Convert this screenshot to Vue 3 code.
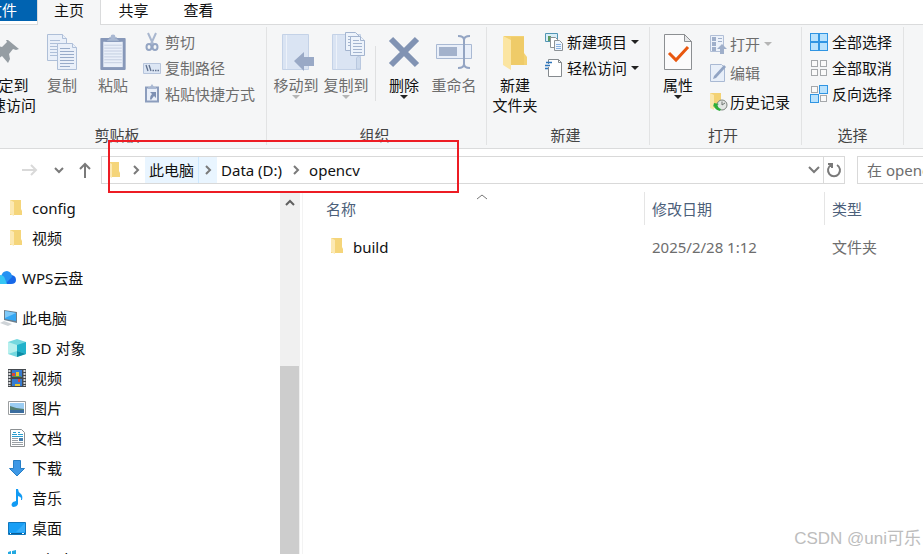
<template>
  <div class="explorer">
    <nav class="tabs">
      <button class="tab tab-file">文件</button>
      <button class="tab active">主页</button>
      <button class="tab">共享</button>
      <button class="tab">查看</button>
    </nav>

    <div class="ribbon">
      <section class="group clipboard">
        <div class="tools">
          <button class="big">
            <svg width="30" height="36" viewBox="0 0 30 36">
              <path fill="#959da3" d="M17 6 28 15l-3 1-3-1-4 5 1 5-2 4-6-7-9 7v-3l6-7-6-5 4-2 5 1 5-5-1-2z" />
            </svg>
            <span>固定到<br />快速访问</span>
          </button>
          <button class="big mid" disabled>
            <svg width="32" height="36" viewBox="0 0 32 36">
              <g fill="#eaf0f9" stroke="#aebfd8">
                <path d="M1.500.5h15l4 4v22h-19z" />
                <path d="M16.500.5v4h4" />
                <path d="M4 6.500h10M4 9.500h14M4 12.500h14M4 15.500h14M4 18.500h14M4 21.500h14" />
                <path d="M11.500 9.500h15l4 4v22h-19z" />
                <path d="M26.500 9.500v4h4" />
                <path stroke="#98abc9" d="M14 14.500h10M14 17.500h14M14 20.500h14M14 23.500h14M14 26.500h14M14 29.500h14M14 32.500h10" />
              </g>
            </svg>
            <span>复制</span>
          </button>
          <button class="big mid" disabled>
            <svg width="28" height="37" viewBox="0 0 28 37">
              <rect x="1" y="4" width="26" height="33" rx="1" fill="#8798b9" />
              <path fill="#e9eff9" d="M4 8h20v26H4z" />
              <path stroke="#c3cee0" d="M5 11.500h18M5 14.500h18M5 17.500h18M5 20.500h18M5 23.500h18M5 26.500h18M5 29.500h18" />
              <path fill="#a9b8d2" stroke="#8798b9" d="M6.500 7.500l4-3.500h7l4 3.500z" />
              <circle cx="14" cy="3" r="2.500" fill="#a9b8d2" />
            </svg>
            <span>粘贴</span>
          </button>
          <div class="small-list after-mid">
            <button class="small" disabled>
              <svg width="18" height="18" viewBox="0 0 18 18" fill="none" stroke="#94a5c3" stroke-width="2">
                <path d="M5 0l5 11M13 0L8 11" stroke="#a9b7cf" />
                <ellipse cx="6" cy="14" rx="2.500" ry="3" />
                <ellipse cx="12" cy="14" rx="2.500" ry="3" />
              </svg>
              <span>剪切</span>
            </button>
            <button class="small" disabled>
              <svg width="18" height="18" viewBox="0 0 18 18">
                <path fill="#dce6f4" stroke="#b7c5dc" d="M.5 4.500h17v10H.5z" />
                <path fill="none" stroke="#61728f" stroke-width="1.300" d="M3 6l2 6M6 6l2 6M9.500 11.500h1.500M12 11.500h1.500M14.500 11.500h1.500" />
              </svg>
              <span>复制路径</span>
            </button>
            <button class="small" disabled>
              <svg width="18" height="18" viewBox="0 0 18 18">
                <path fill="#e9eff9" stroke="#8c9dbd" stroke-width="2" d="M3 2.500h12v14H3z" />
                <path fill="#a9b8d2" d="M5 4V2h2l2-3 2 3h2v2z" />
                <path fill="#7d90b3" d="M7 7h6v6l-2-2-3 4-1-1 .5-3L9 9z" />
              </svg>
              <span>粘贴快捷方式</span>
            </button>
          </div>
        </div>
        <div class="group-name">剪贴板</div>
      </section>

      <section class="group organize">
        <div class="tools">
          <button class="big mid" disabled>
            <svg width="34" height="36" viewBox="0 0 34 36">
              <path fill="#dae4f3" stroke="#c4d2e7" d="M3.500.5h26v35h-26z" />
              <path stroke="#edf2fa" d="M7.500 1v34" />
              <path fill="#99a9c6" d="M15 27l10-9v5h10v9H25v5z" />
            </svg>
            <span>移动到</span>
            <i class="caret"></i>
          </button>
          <button class="big mid" disabled>
            <svg width="34" height="36" viewBox="0 0 34 36">
              <path fill="#dae4f3" stroke="#c4d2e7" d="M3.500.5h28v35h-28z" />
              <path stroke="#edf2fa" d="M7.500 1v34" />
              <path fill="#cddaec" stroke="#b9c8df" d="M27.500 35V24l2-2 2 2v11z" />
              <g fill="#edf3fb" stroke="#a3b4cf">
                <path d="M16.500-1.500h10l5 5v13h-15z" />
                <path d="M19 2.500h6M19 5.500h6M19 8.500h6M19 11.500h6" />
                <path d="M21.500 2.500h10l4 4v15h-14z" />
                <path d="M31.500 2.500v4h4M24 6.500h6M24 9.500h9M24 12.500h9M24 15.500h9M24 18.500h9" />
              </g>
            </svg>
            <span>复制到</span>
            <i class="caret"></i>
          </button>
          <div class="divider"></div>
          <button class="big mid">
            <svg width="34" height="36" viewBox="0 0 34 36">
              <path fill="none" stroke="#8193b3" stroke-width="6" d="M4 5l26 26M30 5L4 31" />
            </svg>
            <span>删除</span>
            <i class="caret"></i>
          </button>
          <button class="big mid" disabled>
            <svg width="36" height="36" viewBox="0 0 36 36">
              <path fill="#e9eff9" stroke="#a9b9d3" d="M.5 10.500h35v14H.5z" />
              <path fill="#a3b2cc" d="M3 13h18v9H3z" />
              <path fill="none" stroke="#94a5c3" stroke-width="2" d="M28 4v28M22 2q6 0 6 4 0-4 6-4M22 34q6 0 6-4 0 4 6 4" />
            </svg>
            <span>重命名</span>
          </button>
        </div>
        <div class="group-name">组织</div>
      </section>

      <section class="group create">
        <div class="tools">
          <button class="big mid">
            <svg width="28" height="36" viewBox="0 0 28 36">
              <path fill="#f3d274" d="M3 2h20v17l3 4v8H3z" />
              <path fill="#eac35c" d="M10 3h13v28H10z" opacity=".45" />
              <path fill="#fbe5a2" d="M2 2l8 4v30l-8-5z" />
            </svg>
            <span>新建<br />文件夹</span>
          </button>
          <div class="small-list">
            <button class="small">
              <svg width="18" height="18" viewBox="0 0 18 18">
                <path fill="#d9eef8" stroke="#5296b5" d="M.5.5h12v8H.5z" />
                <path fill="#5c9a61" d="M3 3h3v5H3z" />
                <path fill="#fff" stroke="#8d9296" d="M5.500 4.500h5l3 3v7h-8z" />
                <path fill="#eef5fe" stroke="#8d9296" d="M9.500 7.500h5l3 3v7h-8z" />
                <path stroke="#88b0e0" d="M11 11.500h5M11 13.500h5M11 15.500h5" />
              </svg>
              <span>新建项目</span>
              <i class="caret"></i>
            </button>
            <button class="small">
              <svg width="18" height="18" viewBox="0 0 18 18">
                <path fill="#fff" stroke="#858a8e" d="M3.500 5V.5h10l3 3v14h-13V8" />
                <path fill="none" stroke="#858a8e" d="M13.500.5v3h3" />
                <path stroke="#2e76bb" stroke-width="1.500" d="M1 3.500h6M0 6.500h5M0 9.500h3" />
              </svg>
              <span>轻松访问</span>
              <i class="caret"></i>
            </button>
          </div>
        </div>
        <div class="group-name">新建</div>
      </section>

      <section class="group open">
        <div class="tools">
          <button class="big mid">
            <svg width="28" height="36" viewBox="0 0 28 36">
              <path fill="#fbfbfc" stroke="#8c8f92" d="M.5.5h20l7 7v28H.5z" />
              <path fill="#e6e7e9" stroke="#8c8f92" d="M20.500.5v7h7z" />
              <path fill="none" stroke="#e8570f" stroke-width="3" d="M5 19l7 7 12-13" />
            </svg>
            <span>属性</span>
            <i class="caret"></i>
          </button>
          <div class="small-list roomy">
            <button class="small" disabled>
              <svg width="16" height="18" viewBox="0 0 16 18">
                <path fill="#edf2fa" stroke="#b1bfd7" d="M.5.5h13v16H.5z" />
                <path fill="#9fafca" d="M2 2h4v4H2zM2 7h4v4H2zM2 12h4v4H2zM8 3h4v1H8zM8 6h4v1H8zM12 9l5 5h-3v5h-4v-5H7z" />
              </svg>
              <span>打开</span>
              <i class="caret"></i>
            </button>
            <button class="small" disabled>
              <svg width="16" height="18" viewBox="0 0 16 18">
                <path fill="#e8eff9" stroke="#a9b9d3" d="M.5.5h11l3 3v14H.5z" />
                <path fill="#91a4c4" d="M3 15l1-3L14 1l2 2L6 14z" />
              </svg>
              <span>编辑</span>
            </button>
            <button class="small">
              <svg width="16" height="18" viewBox="0 0 16 18">
                <path fill="#f3d274" d="M0 0h11v15H0z" />
                <path fill="#fbe7ac" d="M0 0l4 2v15l-4-2z" />
                <circle cx="12" cy="12" r="5" fill="#e3e6e4" stroke="#7b827d" />
                <path fill="none" stroke="#6f7571" d="M12 8.500V12l3-2" />
                <path fill="#2fae3a" d="M4 10l5 1-2 1q1 3 4 4l-1 2q-5-1-6-5l-1 1z" />
              </svg>
              <span>历史记录</span>
            </button>
          </div>
        </div>
        <div class="group-name">打开</div>
      </section>

      <section class="group select">
        <div class="tools">
          <div class="small-list">
            <button v-for="item in selectItems" :key="item.label" class="small">
              <svg width="18" height="18" viewBox="0 0 18 18">
                <rect
                  v-for="(on, i) in item.cells"
                  :key="i"
                  :x="(i % 2) * 9 + (on ? 0.5 : 1.5)"
                  :y="(i > 1 ? 9 : 0) + (on ? 0.5 : 1.5)"
                  :width="on ? 8 : 6"
                  :height="on ? 8 : 6"
                  :fill="on ? '#b9e2fd' : '#fafafa'"
                  :stroke="on ? '#3095e3' : '#a5a8ab'"
                />
              </svg>
              <span>{{ item.label }}</span>
            </button>
          </div>
        </div>
        <div class="group-name">选择</div>
      </section>
    </div>

    <div class="address-row">
      <button class="nav forward" aria-label="前进" disabled>
        <svg width="16" height="14" viewBox="0 0 16 14"><path d="M0 7h14M9 2l5 5-5 5" /></svg>
      </button>
      <button class="nav recent" aria-label="最近浏览的位置">
        <svg width="10" height="8" viewBox="0 0 10 8"><path d="M1 2l4 4 4-4" /></svg>
      </button>
      <button class="nav up" aria-label="上移">
        <svg width="14" height="16" viewBox="0 0 14 16"><path d="M7 16V2M2 7l5-5 5 5" /></svg>
      </button>
      <div class="address">
        <svg class="folder" width="13" height="18" viewBox="0 0 13 18">
          <path fill="#f5d57a" d="M0 1h11v9l1 2v4H0z" />
          <path fill="#fce9b3" d="M0 1l4 2v14l-4-2z" />
        </svg>
        <template v-for="(crumb, i) in crumbs" :key="crumb">
          <span v-if="crumbs[i - 1] !== hovered" class="sep">
            <svg width="8" height="10" viewBox="0 0 8 10"><path d="M2 1l4 4-4 4" /></svg>
          </span>
          <span v-if="crumb === hovered" class="crumb-hover">
            <button class="crumb">{{ crumb }}</button>
            <span class="sep">
              <svg width="8" height="10" viewBox="0 0 8 10"><path d="M2 1l4 4-4 4" /></svg>
            </span>
          </span>
          <button v-else class="crumb">{{ crumb }}</button>
        </template>
        <button class="drop" aria-label="以前的位置">
          <svg width="12" height="8" viewBox="0 0 12 8"><path d="M1 1l5 5 5-5" /></svg>
        </button>
        <button class="refresh" aria-label="刷新">
          <svg width="16" height="16" viewBox="0 0 16 16"><path d="M11 3a6 6 0 1 1-6 0M2 2h4v4" /></svg>
        </button>
      </div>
      <input class="search" type="text" placeholder="在 opencv 中搜索" aria-label="搜索" />
    </div>

    <div class="content">
      <aside class="tree">
        <ul>
          <li v-for="node in nodes" :key="node.icon + node.label" :class="{ root: node.root }">
            <a href="#">
              <svg class="node-icon" width="18" height="18" viewBox="0 0 18 18">
                <g v-if="node.icon === 'folder'">
                  <path fill="#f5d57a" d="M2 1h11v9l1 2v4H2z" />
                  <path fill="#fce9b3" d="M2 1l4 2v14l-4-2z" />
                </g>
                <g v-else-if="node.icon === 'cloud'">
                  <path fill="#1768e8" d="M4 15L10 6q6 0 6 5 0 4-5 4z" />
                  <path fill="#2491f3" d="M1 8q1-6 6-6 5 1 5 6L5 15H0z" />
                  <path fill="#36c6f4" d="M0 6q4 0 5 4l2 5H0z" />
                </g>
                <g v-else-if="node.icon === 'pc'">
                  <path fill="#6d7f8d" d="M4 1l13 2v11L4 11z" />
                  <path fill="#35a7f3" d="M5 2l11 2v8L5 10z" />
                  <path fill="#80caf9" d="M5 2l11 2-11 5z" />
                  <path fill="#cfd4d8" d="M0 14l4-2 8 3-4 2z" />
                </g>
                <g v-else-if="node.icon === 'cube'">
                  <path fill="#74d8df" d="M0 3l9-3 9 3v12l-9 3-9-3z" />
                  <path fill="#b7f0ee" d="M0 3l9 3v6l-9 3z" />
                  <path fill="#22b2cb" d="M9 6l9-3v12l-9-3z" />
                  <path fill="#0c8ca6" d="M9 12l9 3-9 3z" />
                </g>
                <g v-else-if="node.icon === 'video'">
                  <path fill="#44494e" d="M0 0h18v18H0z" />
                  <path stroke="#d7d9db" stroke-width="2" stroke-dasharray="2 1" d="M1.500 1v16M16.500 1v16" />
                  <path fill="#377bd0" d="M4 1h10v7H4zM4 10h10v7H4z" />
                  <path fill="#dc4835" d="M4 4h3v3H4zM10 10h2v3h-2z" />
                  <path fill="#e9c72e" d="M8 3h3v4H8zM7 15h5v2H7z" />
                  <path fill="#59a53c" d="M5 7h8v1H5z" />
                </g>
                <g v-else-if="node.icon === 'picture'">
                  <path fill="#fff" stroke="#9b9ea0" d="M.5 2.500h17v13H.5z" />
                  <path fill="#9bcdf3" d="M2 4h14v10H2z" />
                  <path fill="#547f72" d="M2 7q7 3 14 3v2H2z" />
                  <path fill="#3b6d9f" d="M2 11h14v3H2z" />
                </g>
                <g v-else-if="node.icon === 'document'">
                  <path fill="#fff" stroke="#8c9093" d="M2.500.5h11l3 3v14h-14z" />
                  <path stroke="#299dce" d="M5 3.500h3M10 3.500h2M4 5.500h5M10 5.500h5M4 7.500h11" />
                  <path stroke="#9ba0a5" d="M4 9.500h6M4 11.500h6M4 13.500h11M4 15.500h11" />
                  <path fill="#497fae" d="M11 9h4v3h-4z" />
                </g>
                <path v-else-if="node.icon === 'download'" fill="#3d98e6" stroke="#277fc6" d="M5.500 1.500h7v8h4L9 17 1.500 9.500h4z" />
                <g v-else-if="node.icon === 'music'">
                  <path fill="#129bf4" d="M8 0h2q0 3 3 5 2 2 1 6h-1q1-3-3-4v8q-1 3-5 3-3-2 0-5l3-1z" />
                </g>
                <g v-else-if="node.icon === 'desktop'">
                  <path fill="#189ff6" stroke="#1077bd" d="M.5 3.500h17v12H.5z" />
                  <path fill="#4bb8fb" d="M17 4v9L8 13z" opacity=".6" />
                  <path stroke="#0a5c93" d="M1 14.500h16" />
                  <path stroke="#fff" d="M2 14.500h1M14 14.500h2" />
                </g>
                <g v-else>
                  <path fill="#22a8e0" d="M0 3l3-1v3H0zM4 2l4-1v4H4z" />
                  <path fill="#a3a8ac" d="M0 8h18v6H0z" />
                </g>
              </svg>
              <span>{{ node.label }}</span>
            </a>
          </li>
        </ul>
      </aside>
      <div class="scrollbar">
        <button aria-label="向上滚动">
          <svg width="12" height="8" viewBox="0 0 12 8"><path d="M2 6l4-4 4 4" /></svg>
        </button>
        <div class="thumb"></div>
      </div>
      <main class="files">
        <svg class="sort" width="12" height="6" viewBox="0 0 12 6"><path d="M1 5l5-4 5 4" /></svg>
        <table>
          <colgroup>
            <col class="col-name" />
            <col class="col-date" />
            <col />
          </colgroup>
          <thead>
            <tr>
              <th>名称</th>
              <th>修改日期</th>
              <th>类型</th>
            </tr>
          </thead>
          <tbody>
            <tr v-for="file in files" :key="file.name">
              <td>
                <div class="file-name">
                  <svg width="13" height="18" viewBox="0 0 13 18">
                    <path fill="#f5d57a" d="M0 0h11v9l1 2v4H0z" />
                    <path fill="#fce9b3" d="M0 0l4 2v14l-4-2z" />
                  </svg>
                  <span>{{ file.name }}</span>
                </div>
              </td>
              <td>{{ file.date }}</td>
              <td>{{ file.type }}</td>
            </tr>
          </tbody>
        </table>
      </main>
    </div>

    <div class="highlight"></div>
    <div class="watermark">CSDN @uni可乐</div>
  </div>
</template>

<script setup>
import { ref } from 'vue';

const crumbs = ['此电脑', 'Data (D:)', 'opencv'];
const hovered = ref('此电脑');

const selectItems = [
  { label: '全部选择', cells: [true, true, true, true] },
  { label: '全部取消', cells: [false, false, false, false] },
  { label: '反向选择', cells: [false, true, true, false] },
];

const nodes = [
  { label: 'config', icon: 'folder' },
  { label: '视频', icon: 'folder' },
  { label: 'WPS云盘', icon: 'cloud', root: true },
  { label: '此电脑', icon: 'pc', root: true },
  { label: '3D 对象', icon: 'cube' },
  { label: '视频', icon: 'video' },
  { label: '图片', icon: 'picture' },
  { label: '文档', icon: 'document' },
  { label: '下载', icon: 'download' },
  { label: '音乐', icon: 'music' },
  { label: '桌面', icon: 'desktop' },
  { label: 'Windows-SSD (C:)', icon: 'drive' },
];

const files = ref([{ name: 'build', date: '2025/2/28 1:12', type: '文件夹' }]);
</script>

<style>
body {
  margin: 0;
  overflow: hidden;
}
</style>

<style scoped>
.explorer {
  position: relative;
  display: flex;
  flex-direction: column;
  height: 100vh;
  overflow: hidden;
  background: #fff;
  color: #111;
  font-family: "Noto Sans", "Noto Sans CJK SC", sans-serif;
  font-size: 15px;
  line-height: 20px;
}

button,
input {
  font: inherit;
  color: inherit;
  background: none;
  border: 0;
  padding: 0;
  margin: 0;
  white-space: nowrap;
}

svg {
  flex: none;
  overflow: visible;
}

a {
  color: inherit;
  text-decoration: none;
}

.tabs {
  display: flex;
  height: 24px;
  border-bottom: 1px solid #dadbdc;
}

.tab {
  width: 65px;
  height: 24px;
  padding-bottom: 12px;
}

.tab-file {
  width: 60px;
  height: 21px;
  margin-left: -23px;
  padding: 0 20px 9px 0;
  text-align: right;
  background: #0063b1;
  color: #fff;
}

.tab.active {
  box-sizing: border-box;
  width: 64px;
  height: 25px;
  background: #f5f6f7;
  border: solid #dadbdc;
  border-width: 0 1px;
}

.ribbon {
  display: flex;
  flex: none;
  height: 123px;
  background: #f5f6f7;
  border-bottom: 1px solid #dadbdc;
}

.group {
  display: flex;
  flex: none;
  flex-direction: column;
  justify-content: space-between;
  box-sizing: border-box;
  height: 118px;
  margin-top: 2px;
  border-right: 1px solid #e2e3e4;
}

.clipboard {
  width: 296px;
  margin-left: -29px;
  padding-left: 5px;
}

.clipboard .big {
  margin-right: 1px;
}

.organize {
  width: 220px;
  padding-left: 4px;
}

.create {
  width: 163px;
  padding-left: 3px;
}

.open {
  width: 152px;
  padding-left: 3px;
}

.select {
  width: 102px;
  padding-left: 8px;
}

.tools {
  display: flex;
}

.group-name {
  padding-right: 8px;
  text-align: center;
  color: #444;
}

.big {
  display: flex;
  flex-direction: column;
  align-items: center;
  width: 60px;
  padding-top: 7px;
}

.mid {
  width: 50px;
}

.big svg {
  height: 36px;
  margin-bottom: 5px;
}

button:disabled {
  color: #6d6d6d;
}

.caret {
  border: 4px solid transparent;
  border-top-color: #222;
  border-bottom: 0;
}

button:disabled .caret {
  border-top-color: #b5b5b5;
}

.small-list {
  display: flex;
  flex-direction: column;
  padding-top: 2px;
}

.small {
  display: flex;
  align-items: center;
  gap: 4px;
  height: 26px;
}

.after-mid {
  padding-left: 4px;
}

.create .small-list {
  padding-left: 5px;
}

.open .small-list {
  padding-left: 7px;
}

.roomy .small {
  height: 29px;
}

.divider {
  width: 1px;
  height: 55px;
  margin: 19px 3px 0 4px;
  background: #dfe0e1;
}

.address-row {
  display: flex;
  flex: none;
  align-items: center;
  height: 42px;
  padding-left: 22px;
}

.nav {
  display: flex;
  fill: none;
  stroke: #7a7a7a;
  stroke-width: 2;
}

.forward {
  margin-right: 16px;
  stroke: #d9d9d9;
}

.recent {
  margin-right: 14px;
}

.up {
  margin-right: 9px;
}

.address {
  display: flex;
  flex: 1;
  align-items: center;
  box-sizing: border-box;
  height: 28px;
  border: 1px solid #d9d9d9;
}

.address .folder {
  margin: 0 5px 0 6px;
}

.sep {
  display: flex;
  align-items: center;
  justify-content: center;
  width: 19px;
  height: 26px;
}

.sep svg,
.drop svg,
.refresh svg {
  fill: none;
  stroke: #7a7a7a;
  stroke-width: 2;
}

.crumb {
  height: 26px;
  padding: 0 4px;
}

.crumb-hover {
  display: flex;
  box-sizing: border-box;
  height: 26px;
  background: #e9f5ff;
}

.crumb-hover .sep {
  box-sizing: border-box;
  border-left: 1px solid #cce8ff;
}

.drop {
  display: flex;
  margin: 0 3px 0 auto;
}

.refresh {
  display: flex;
  align-items: center;
  justify-content: center;
  width: 21px;
  height: 26px;
  border-left: 1px solid #d9d9d9;
}

.search {
  box-sizing: border-box;
  width: 66px;
  height: 28px;
  margin-left: 12px;
  padding-left: 9px;
  border: 1px solid #d9d9d9;
  border-right: 0;
}

.search::placeholder {
  color: #6d6d6d;
  opacity: 1;
}

.content {
  display: flex;
  flex: 1;
  min-height: 0;
}

.tree {
  width: 280px;
  overflow: hidden;
}

.tree ul {
  margin: 0;
  padding: 2px 0 0;
  list-style: none;
}

.tree li {
  padding-left: 8px;
}

.tree li.root {
  margin-top: 10px;
  padding-left: 0;
}

.tree a {
  display: flex;
  align-items: center;
  gap: 6px;
  height: 30px;
}

.root a {
  gap: 4px;
}

.scrollbar {
  width: 20px;
  background: #f0f0f0;
}

.scrollbar button {
  display: flex;
  align-items: center;
  justify-content: center;
  width: 20px;
  height: 24px;
  fill: none;
  stroke: #606060;
  stroke-width: 2;
}

.thumb {
  height: 100%;
  margin: 151px 1px 0 0;
  background: #cdcdcd;
}

.files {
  position: relative;
  flex: 1;
  min-width: 0;
  margin-left: 2px;
  padding-top: 1px;
  overflow: hidden;
  border-left: 1px solid #f3f3f3;
}

.sort {
  position: absolute;
  top: 3px;
  left: 173px;
  fill: none;
  stroke: #777;
}

table {
  width: 100%;
  table-layout: fixed;
  border-collapse: separate;
  border-spacing: 0;
}

.col-name {
  width: 342px;
}

.col-date {
  width: 180px;
}

th {
  height: 33px;
  padding: 0 0 0 7px;
  border-right: 1px solid #e5e5e5;
  text-align: left;
  font-weight: normal;
  color: #4c607a;
}

th:first-child {
  padding-left: 23px;
}

th:last-child {
  border-right: 0;
}

td {
  height: 30px;
  padding: 7px 0 0 7px;
  color: #6d6d6d;
}

.file-name {
  display: flex;
  align-items: center;
  gap: 9px;
  padding-left: 21px;
  color: #111;
}

.highlight {
  position: absolute;
  top: 140px;
  left: 108px;
  box-sizing: border-box;
  width: 351px;
  height: 53px;
  border: 2px solid #ed1c24;
  pointer-events: none;
}

.watermark {
  position: absolute;
  right: 2px;
  bottom: 5px;
  font-family: "Liberation Sans", "Noto Sans CJK SC", sans-serif;
  font-size: 17px;
  color: #bdbdbd;
}
</style>
